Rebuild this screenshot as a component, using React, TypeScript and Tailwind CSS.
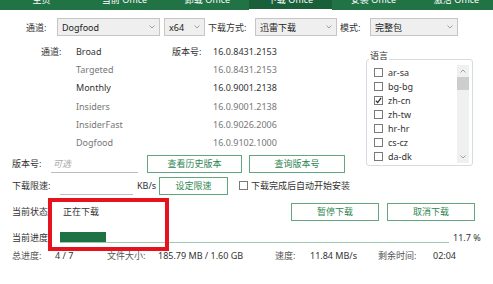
import * as React from "react";

const TABS = ["主页", "当前 Office", "卸载 Office", "下载 Office", "安装 Office", "激活 Office"];

const CHANNELS = [
  { name: "Broad", ver: "16.0.8431.2153", dark: true },
  { name: "Targeted", ver: "16.0.8431.2153", dark: false },
  { name: "Monthly", ver: "16.0.9001.2138", dark: true },
  { name: "Insiders", ver: "16.0.9001.2138", dark: false },
  { name: "InsiderFast", ver: "16.0.9026.2006", dark: false },
  { name: "Dogfood", ver: "16.0.9102.1000", dark: false },
];

const LANGS = [
  { code: "ar-sa", on: false },
  { code: "bg-bg", on: false },
  { code: "zh-cn", on: true },
  { code: "zh-tw", on: false },
  { code: "hr-hr", on: false },
  { code: "cs-cz", on: false },
  { code: "da-dk", on: false },
];

function Chevron({ up }: { up?: boolean }) {
  return (
    <svg viewBox="0 0 6 4" className="h-[4px] w-[6px]" fill="none" stroke="#a0a0a0" strokeWidth="1">
      <path d={up ? "M0.5 3.5 3 1l2.5 2.5" : "M0.5 0.5 3 3l2.5-2.5"} />
    </svg>
  );
}

function Select({ value, className }: { value: string; className: string }) {
  return (
    <div
      className={[
        "flex h-[18px] items-center justify-between border border-[#c6c6c6] bg-[#efefef] pl-[4px] pr-[4px]",
        className,
      ].join(" ")}
    >
      <span className="text-[#222]">{value}</span>
      <Chevron />
    </div>
  );
}

function GreenButton({ label, className }: { label: string; className: string }) {
  return (
    <button
      type="button"
      className={[
        "flex h-[18px] items-center justify-center border border-[#62a67f] bg-white text-[#2f8652]",
        className,
      ].join(" ")}
    >
      {label}
    </button>
  );
}

function Box({ checked }: { checked?: boolean }) {
  return (
    <span className="flex h-[9px] w-[9px] shrink-0 items-center justify-center border border-[#7a7a7a] bg-white">
      {checked && (
        <svg viewBox="0 0 8 8" className="h-[7px] w-[7px]" fill="none" stroke="#222" strokeWidth="1.3">
          <path d="M1 4.2 3 6.5 7 1" />
        </svg>
      )}
    </span>
  );
}

export default function App() {
  return (
    <div className="relative h-[284px] w-[493px] overflow-hidden bg-white font-['Noto_Sans','Noto_Sans_CJK_SC',sans-serif] text-[9px] leading-none text-[#333]">
      {/* tabs – cropped at the top */}
      <nav className="flex h-[10px] overflow-hidden bg-[#217346]">
        {TABS.map((t, i) => (
          <div
            key={t}
            className={[
              "flex w-[83px] shrink-0 justify-center",
              i === 3 ? "h-full border-b border-white bg-[#19603a]" : "",
            ].join(" ")}
          >
            <span className="-mt-[5px] text-white">{t}</span>
          </div>
        ))}
      </nav>

      {/* row 1 */}
      <div className="mt-[8px] flex h-[18px] items-center pl-[26px]">
        <span className="w-[31px]">通道:</span>
        <Select value="Dogfood" className="w-[103px]" />
        <Select value="x64" className="ml-[4px] w-[41px]" />
        <span className="ml-[3px] w-[47px]">下载方式:</span>
        <Select value="迅雷下载" className="w-[82px]" />
        <span className="ml-[3px] w-[30px]">模式:</span>
        <Select value="完整包" className="w-[88px]" />
      </div>

      {/* channels + languages */}
      <div className="mt-[6px] flex">
        <div className="w-[366px] shrink-0">
          {CHANNELS.map((c, i) => (
            <div key={c.name} className="flex h-[18.3px] items-center pl-[41px]">
              <span className="w-[35px]">{i === 0 ? "通道:" : ""}</span>
              <span className={["w-[96px]", c.dark ? "text-[#333]" : "text-[#777]"].join(" ")}>{c.name}</span>
              <span className="w-[41px]">{i === 0 ? "版本号:" : ""}</span>
              <span className={c.dark ? "text-[#333]" : "text-[#777]"}>{c.ver}</span>
            </div>
          ))}

          <div className="mt-[3px] flex h-[18px] items-center pl-[12px]">
            <span className="w-[39px]">版本号:</span>
            <div className="flex h-full w-[87px] items-center border-b border-[#bdbdbd] pl-[2px] italic text-[#aaa]">可选</div>
            <GreenButton label="查看历史版本" className="ml-[9px] w-[95px]" />
            <GreenButton label="查询版本号" className="ml-[7px] w-[96px]" />
          </div>
        </div>

        <fieldset className="mt-[9px] w-[107px] self-start rounded-[3px] border border-[#d3dde3] pb-[2px]">
          <legend className="ml-[2px] px-[1px] pb-[7px] leading-[10px] text-[#333]">语言</legend>
          <div className="-mt-[3px] flex">
            <div className="flex-1 pl-[7px]">
              {LANGS.map((l) => (
                <div key={l.code} className="flex h-[14px] items-center">
                  <Box checked={l.on} />
                  <span className="ml-[5px]">{l.code}</span>
                </div>
              ))}
            </div>
            <div className="mr-[3px] flex w-[12px] flex-col bg-[#f0f0f0]">
              <div className="flex h-[12px] items-center justify-center">
                <Chevron up />
              </div>
              <div className="h-[13px] bg-[#cdcdcd]" />
              <div className="flex-1" />
              <div className="flex h-[12px] items-center justify-center">
                <Chevron />
              </div>
            </div>
          </div>
        </fieldset>
      </div>

      {/* speed limit */}
      <div className="mt-[4px] flex h-[18px] items-center pl-[12px]">
        <span className="w-[48px]">下载限速:</span>
        <div className="h-full w-[73px] border-b border-[#bdbdbd]" />
        <span className="ml-[4px] w-[22px]">KB/s</span>
        <GreenButton label="设定限速" className="w-[69px]" />
        <span className="ml-[11px]">
          <Box />
        </span>
        <span className="ml-[3px]">下载完成后自动开始安装</span>
      </div>

      {/* state */}
      <div className="mt-[8px] flex h-[18px] items-center pl-[12px] pr-[18px]">
        <span className="w-[51px]">当前状态:</span>
        <span>正在下载</span>
        <GreenButton label="暂停下载" className="ml-auto w-[88px]" />
        <GreenButton label="取消下载" className="ml-[8px] w-[88px]" />
      </div>

      {/* progress */}
      <div className="mt-[11px] flex h-[11px] items-center pl-[12px]">
        <span className="w-[48px]">当前进度:</span>
        <div className="h-full w-[389px] border-b border-[#9ccab0]">
          <div className="h-full bg-[#1e7244]" style={{ width: "11.7%" }} />
        </div>
        <span className="ml-[4px]">11.7 %</span>
      </div>

      {/* totals */}
      <div className="mt-[8px] flex h-[10px] items-center pl-[12px]">
        <span className="w-[43px] text-[#555]">总进度:</span>
        <span className="w-[52px]">4 / 7</span>
        <span className="w-[51px] text-[#555]">文件大小:</span>
        <span className="w-[117px]">185.79 MB / 1.60 GB</span>
        <span className="w-[35px] text-[#555]">速度:</span>
        <span className="w-[68px]">11.84 MB/s</span>
        <span className="w-[55px] text-[#555]">剩余时间:</span>
        <span>02:04</span>
      </div>

      {/* red highlight frame */}
      <div className="absolute left-[48px] top-[198px] h-[53px] w-[121px] border-[4px] border-[#e5131d]" />
    </div>
  );
}
